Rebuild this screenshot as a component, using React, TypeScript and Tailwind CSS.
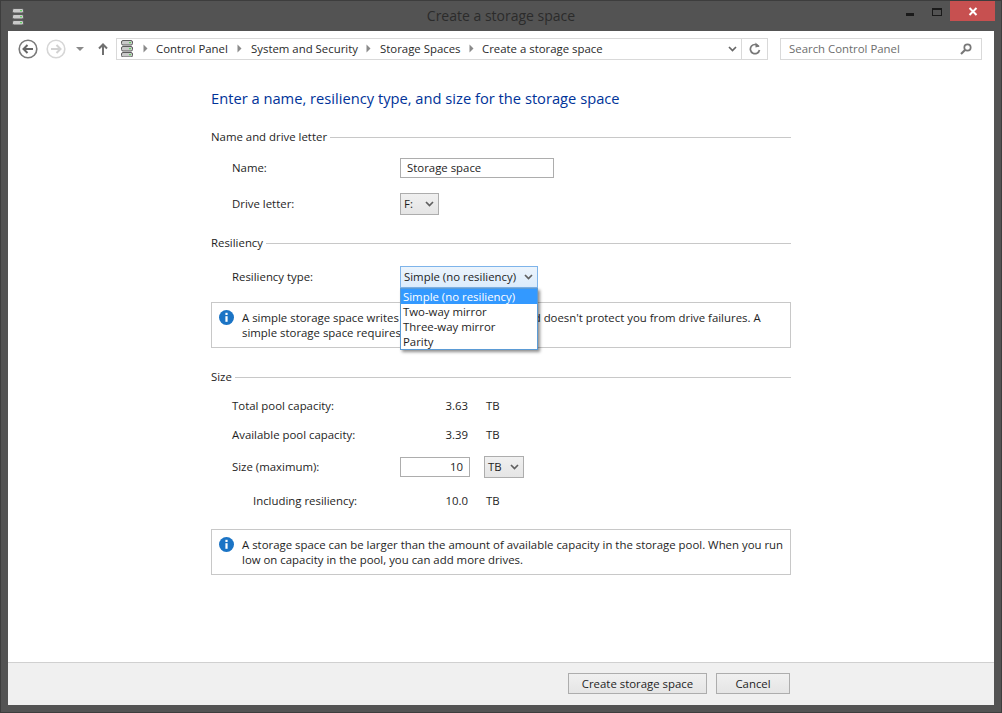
import React from "react";

const Chevron = ({ c = "#606060" }: { c?: string }) => (
  <svg width="9" height="6" viewBox="0 0 9 6" className="shrink-0">
    <path d="M1 1l3.5 3.5L8 1" fill="none" stroke={c} strokeWidth="1.7" />
  </svg>
);

const Tri = () => (
  <svg width="5" height="9" viewBox="0 0 5 9" className="shrink-0">
    <path d="M0.5 0.5L4.5 4.5L0.5 8.5z" fill="#8a8a8a" />
  </svg>
);

const DriveIcon = () => (
  <svg width="12" height="17" viewBox="0 0 12 17" className="shrink-0">
    {[0, 6, 12].map((y) => (
      <g key={y}>
        <rect x="0.5" y={y + 0.5} width="11" height="4.5" rx="1.5" fill="#c9c9c9" stroke="#5c5c5c" />
        <rect x="8" y={y + 2} width="2" height="1.2" fill="#5fd35f" />
      </g>
    ))}
  </svg>
);

const Info = () => (
  <svg width="15" height="15" viewBox="0 0 15 15" className="shrink-0">
    <circle cx="7.5" cy="7.5" r="7.5" fill="#1b74c5" />
    <rect x="6.4" y="2.8" width="2.2" height="2.2" fill="#fff" />
    <rect x="6.4" y="6.2" width="2.2" height="5.6" fill="#fff" />
  </svg>
);

const NavCircle = ({ c, w }: { c: string; w: number }) => (
  <svg width="20" height="20" viewBox="0 0 20 20">
    <circle cx="10" cy="10" r="8.8" fill="none" stroke={c} strokeWidth={w} />
  </svg>
);

const Section = ({ title, className }: { title: string; className: string }) => (
  <div className={`flex items-center gap-[3px] h-[18px] ${className}`}>
    <span className="text-[#1e1e1e]">{title}</span>
    <div className="flex-1 h-px bg-[#c8c8c8]" />
  </div>
);

const Select = ({
  text,
  w,
  className = "",
  skin = "border-[#adadad] from-[#f0f0f0] to-[#e5e5e5]",
}: {
  text: string;
  w: string;
  className?: string;
  skin?: string;
}) => (
  <div className={`h-[22px] border bg-gradient-to-b ${skin} flex items-center justify-between pl-[3px] pr-[4px] whitespace-nowrap ${w} ${className}`}>
    <span>{text}</span>
    <Chevron />
  </div>
);

const Row = ({ label, className, children, deep = false }: { label: string; className: string; children: React.ReactNode; deep?: boolean }) => (
  <div className={`flex items-center ${className}`}>
    <div className={`w-[189px] shrink-0 ${deep ? "pl-[42px]" : "pl-[21px]"}`}>{label}</div>
    {children}
  </div>
);

const Stat = ({ v }: { v: string }) => (
  <>
    <div className="w-[68px] text-right">{v}</div>
    <div className="ml-[18px]">TB</div>
  </>
);

const Note = ({ className, children }: { className: string; children: React.ReactNode }) => (
  <div className={`h-[46px] border border-[#c8c8c8] flex items-start pl-[7px] pt-[7px] ${className}`}>
    <Info />
    <p className="ml-[8px] leading-[15px] whitespace-pre-line">{children}</p>
  </div>
);

export default function App() {
  return (
    <div
      className="w-[1002px] h-[713px] bg-[#535353] border border-[#3d3d3d] flex flex-col text-[11.4px] text-[#1e1e1e] overflow-hidden"
      style={{ fontFamily: '"Open Sans", "Noto Sans", sans-serif' }}
    >
      {/* Title bar */}
      <div className="h-[30px] shrink-0 flex items-start relative">
        <div className="absolute left-[11px] top-[7px]">
          <DriveIcon />
        </div>
        <div className="flex-1 text-center pl-[95px] pt-[5px] text-[14px] leading-[20px] text-[#2b2b2b]">Create a storage space</div>
        <div className="flex items-start">
          <div className="w-[8px] h-[3px] mt-[12px] bg-[#1a1a1a] mr-[18px]" />
          <div className="w-[10px] h-[8px] mt-[7px] border border-[#1a1a1a] border-t-2 mr-[8px]" />
          <div className="w-[45px] h-[20px] bg-[#c75050] flex items-center justify-center mr-[6px]">
            <svg width="10" height="9" viewBox="0 0 10 9">
              <path d="M1.5 1l7 7M8.5 1l-7 7" stroke="#fff" strokeWidth="2" />
            </svg>
          </div>
        </div>
      </div>

      {/* Client area */}
      <div className="w-[986px] ml-[7px] h-[674px] bg-white flex flex-col shrink-0">
        {/* Toolbar */}
        <div className="h-[35px] shrink-0 flex items-center text-[#2a2a2a]">
          <div className="ml-[10px] relative w-[20px] h-[20px]">
            <NavCircle c="#7a7a7a" w={1.6} />
            <svg className="absolute inset-0" width="20" height="20" viewBox="0 0 20 20">
              <path d="M15 10H6M9.5 6L5.5 10l4 4" fill="none" stroke="#666" strokeWidth="2" />
            </svg>
          </div>
          <div className="ml-[8px] relative w-[20px] h-[20px]">
            <NavCircle c="#d6d6d6" w={1.6} />
            <svg className="absolute inset-0" width="20" height="20" viewBox="0 0 20 20">
              <path d="M5 10h9M10.5 6l4 4-4 4" fill="none" stroke="#d2d2d2" strokeWidth="2" />
            </svg>
          </div>
          <svg className="ml-[10px]" width="8" height="4" viewBox="0 0 8 4">
            <path d="M0 0h8L4 4z" fill="#8a8a8a" />
          </svg>
          <svg className="ml-[14px]" width="10" height="12" viewBox="0 0 10 12">
            <path d="M5 12V1.5M1 5.5l4-4 4 4" fill="none" stroke="#707070" strokeWidth="2" />
          </svg>
          <div className="ml-[8px] w-[652px] h-[22px] border border-[#d9d9d9] flex items-center">
            <div className="ml-[4px]"><DriveIcon /></div>
            <div className="ml-[10px]"><Tri /></div>
            <span className="ml-[8px] w-[81px]">Control Panel</span>
            <Tri />
            <span className="ml-[9px] w-[115px]">System and Security</span>
            <Tri />
            <span className="ml-[9px] w-[89px]">Storage Spaces</span>
            <Tri />
            <span className="ml-[8px]">Create a storage space</span>
            <div className="ml-auto flex items-center h-full">
              <Chevron c="#666" />
              <div className="ml-[4px] w-px h-full bg-[#d9d9d9]" />
              <div className="w-[25px] flex justify-center">
                <svg width="12" height="13" viewBox="0 0 12 13">
                  <path d="M9.8 4.5A4.6 4.6 0 1 0 10.5 8" fill="none" stroke="#777" strokeWidth="1.7" />
                  <path d="M6.5 0.5v5l4-1z" fill="#777" />
                </svg>
              </div>
            </div>
          </div>
          <div className="ml-[12px] w-[202px] h-[22px] border border-[#d9d9d9] flex items-center pl-[8px] pr-[9px] justify-between text-[#6d6d6d]">
            <span>Search Control Panel</span>
            <svg width="12" height="12" viewBox="0 0 12 12">
              <circle cx="7.5" cy="4.5" r="3.2" fill="none" stroke="#777" strokeWidth="1.7" />
              <path d="M5 7l-4 4" stroke="#777" strokeWidth="2.2" />
            </svg>
          </div>
        </div>

        {/* Content */}
        <div className="flex-1 pl-[203px] w-[783px]">
          <h1 className="mt-[21px] text-[14.7px] leading-[22px] text-[#003399] font-normal">
            Enter a name, resiliency type, and size for the storage space
          </h1>

          <Section title="Name and drive letter" className="mt-[19px]" />
          <Row label="Name:" className="mt-[12px] h-[20px]">
            <div className="w-[154px] h-[20px] border border-[#adadad] pl-[6px] leading-[18px]">Storage space</div>
          </Row>
          <Row label="Drive letter:" className="mt-[15px] h-[22px]">
            <Select text="F:" w="w-[39px]" />
          </Row>

          <Section title="Resiliency" className="mt-[19px]" />
          <Row label="Resiliency type:" className="mt-[14px] h-[22px]">
            <div className="relative">
              <Select
                text="Simple (no resiliency)"
                w="w-[138px]"
                skin="border-[#7eb4ea] from-[#ecf4fc] to-[#dcecfc]"
              />
              <div className="absolute left-0 top-[22px] w-[138px] h-[62px] bg-white border border-[#5b9bd5] shadow-[2px_2px_3px_rgba(0,0,0,0.45)] leading-[15px] pl-[2px] z-10">
                <div className="bg-[#3399ff] text-white -ml-[2px] pl-[2px] h-[15px]">Simple (no resiliency)</div>
                <div>Two-way mirror</div>
                <div>Three-way mirror</div>
                <div>Parity</div>
              </div>
            </div>
          </Row>
          <Note className="mt-[14px]">
            {"A simple storage space writes one copy of your data and doesn't protect you from drive failures. A\nsimple storage space requires at least one drive."}
          </Note>

          <Section title="Size" className="mt-[20px]" />
          <Row label="Total pool capacity:" className="mt-[11px] h-[18px]">
            <Stat v="3.63" />
          </Row>
          <Row label="Available pool capacity:" className="mt-[11px] h-[18px]">
            <Stat v="3.39" />
          </Row>
          <Row label="Size (maximum):" className="mt-[12px] h-[22px]">
            <div className="w-[70px] h-[20px] border border-[#adadad] text-right pr-[6px] leading-[18px]">10</div>
            <Select text="TB" w="w-[40px]" className="ml-[14px]" />
          </Row>
          <Row label="Including resiliency:" deep className="mt-[14px] h-[18px]">
            <Stat v="10.0" />
          </Row>
          <Note className="mt-[19px]">
            {"A storage space can be larger than the amount of available capacity in the storage pool. When you run\nlow on capacity in the pool, you can add more drives."}
          </Note>
        </div>

        {/* Footer */}
        <div className="h-[43px] shrink-0 bg-[#f0f0f0] border-t border-[#d0d0d0] flex items-start justify-end pt-[10px] pr-[204px]">
          <button className="w-[139px] h-[21px] border border-[#adadad] bg-gradient-to-b from-[#f0f0f0] to-[#e5e5e5] leading-[19px]">Create storage space</button>
          <button className="ml-[9px] w-[74px] h-[21px] border border-[#adadad] bg-gradient-to-b from-[#f0f0f0] to-[#e5e5e5] leading-[19px]">Cancel</button>
        </div>
      </div>
    </div>
  );
}
